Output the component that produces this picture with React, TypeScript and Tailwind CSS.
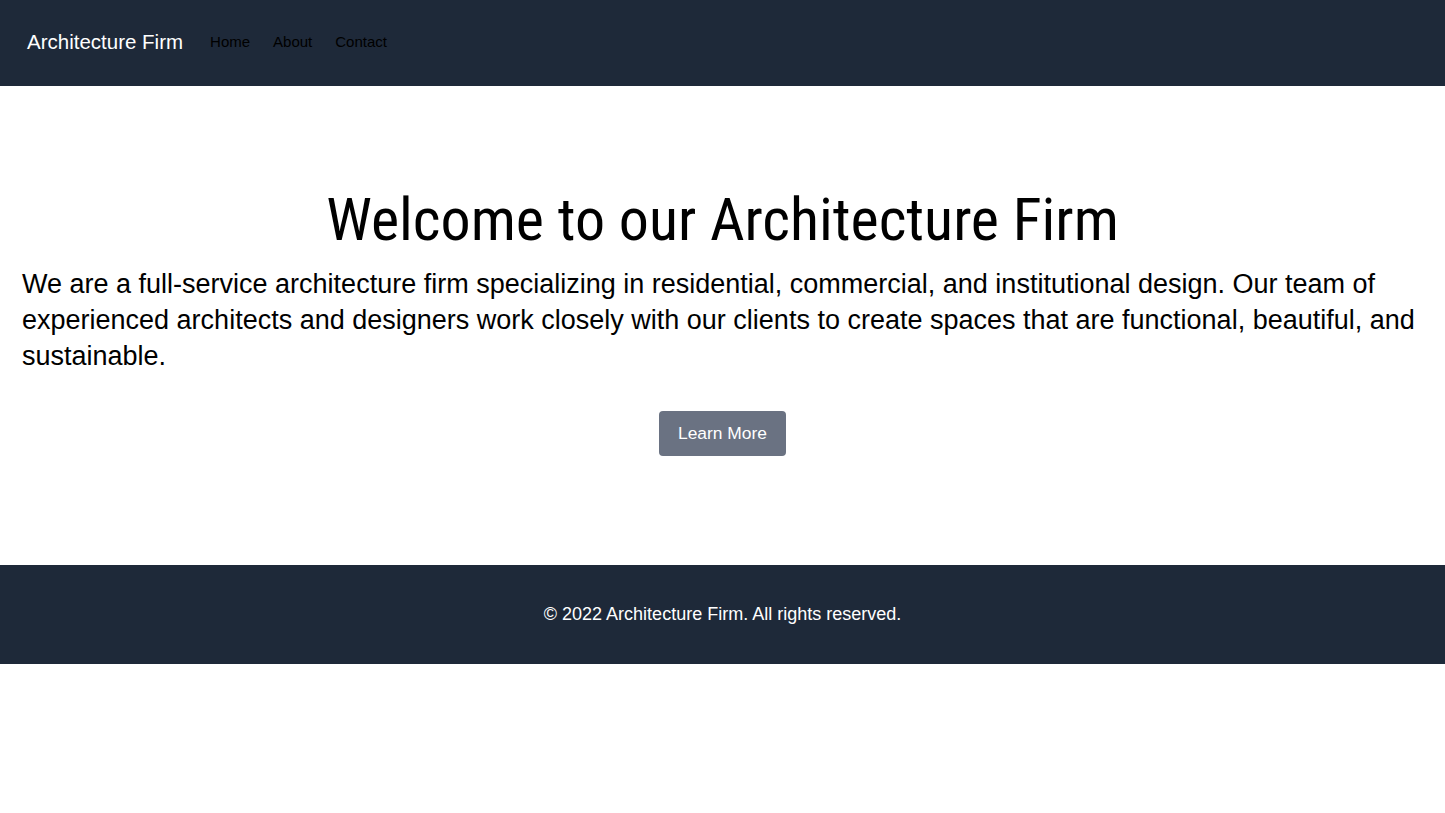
export default function App() {
  return (
    <div className="min-h-screen bg-white font-['Liberation_Sans',Arial,sans-serif]">
      <nav className="bg-gray-800 h-[86px] flex items-center px-[27px] pb-[2px]">
        <span className="text-white text-[20.5px] mr-[27px]">Architecture Firm</span>
        <div className="flex gap-[23px] text-[15px] text-black">
          <a href="#">Home</a>
          <a href="#">About</a>
          <a href="#">Contact</a>
        </div>
      </nav>
      <section className="pt-[104px] pb-[109px] px-[22px] text-center">
        <h1 className="text-6xl leading-[60px] text-black font-['Roboto_Condensed','Liberation_Sans',sans-serif]">
          Welcome to our Architecture Firm
        </h1>
        <p className="text-[27px] text-left mt-4 leading-9 text-black">
          We are a full-service architecture firm specializing in residential, commercial, and institutional design. Our team of experienced architects and designers work closely with our clients to create spaces that are functional, beautiful, and sustainable.
        </p>
        <button className="mt-[37px] bg-gray-500 text-white text-[17.4px] px-[19px] h-[45px] rounded">
          Learn More
        </button>
      </section>
      <footer className="bg-gray-800 h-[99px] flex items-center justify-center text-white text-lg pb-[2px]">
        © 2022 Architecture Firm. All rights reserved.
      </footer>
    </div>
  );
}
